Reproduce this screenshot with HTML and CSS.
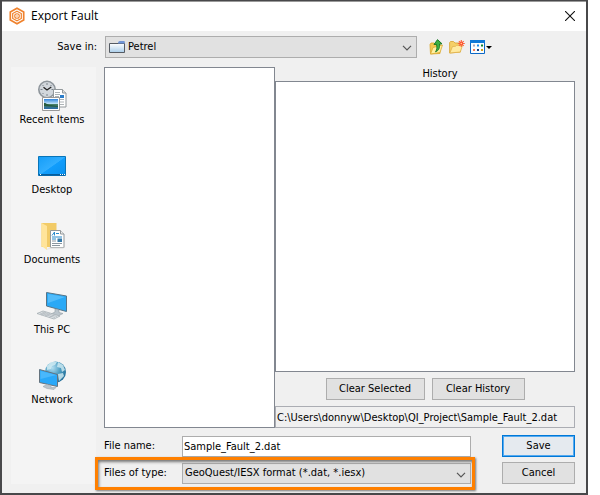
FILE: index.html
```html
<!DOCTYPE html>
<html lang="en">
<head>
<meta charset="utf-8">
<title>Export Fault</title>
<link rel="stylesheet" href="styles.css">
</head>
<body>
<main class="window">
  <header class="titlebar">
    <svg class="app-icon" width="16" height="18" viewBox="0 0 16 18" fill="none" stroke="#f0822d">
      <path d="M8 1.2 14.7 5v8L8 16.8 1.3 13V5z" stroke-width="1.7"/>
      <path d="M8 4.2 12.3 6.6v4.8L8 13.8l-4.3-2.4V6.6z" stroke-width="1.2"/>
      <circle cx="8" cy="9" r="2.3" stroke-width="1.1"/>
      <circle cx="8" cy="9" r=".7" fill="#f0822d" stroke="none"/>
    </svg>
    <h1 class="title">Export Fault</h1>
    <button class="close" type="button" aria-label="Close">
      <svg width="10" height="10" viewBox="0 0 10 10" stroke="#111" stroke-width="1.1"><path d="M0 0 10 10M10 0 0 10"/></svg>
    </button>
  </header>

  <form class="dialog">
    <div class="location">
      <label class="location-label" for="save-in">Save in:</label>
      <div class="combo combo-folder">
        <select id="save-in"><option>Petrel</option></select>
        <svg class="combo-icon" width="16" height="12" viewBox="0 0 16 12">
          <defs><linearGradient id="folder" x2="0" y2="1"><stop stop-color="#fff"/><stop offset="1" stop-color="#a9cdea"/></linearGradient></defs>
          <path d="M9 2.5 10.5.3H15.5v3H9z" fill="#5279c4"/>
          <path d="M.5 2.5h15v9H.5z" fill="url(#folder)" stroke="#555b63"/>
          <path d="M9.500 .5H15.500V2.500H9z" fill="#6f96da"/>
        </svg>
        <svg class="chevron" width="10" height="6" viewBox="0 0 10 6" fill="none" stroke="#555" stroke-width="1.2"><path d="M1 .8 5 4.8 9 .8"/></svg>
      </div>
      <div class="tools">
        <button class="tool" type="button" aria-label="Up one level">
          <svg width="15" height="16" viewBox="0 0 15 16">
            <path d="M1 5.5 2 4h3l1 1h5v9.5L1.5 15z" fill="#f2c84f" stroke="#d7a52c" stroke-width=".8"/>
            <path d="M1.5 15 4 8.5 13.5 6 11 13.5z" fill="#fff0a3" stroke="#dca931" stroke-width=".8"/>
            <path d="M8.5.6 13 4.8l-2.5.3c.3 3.6-.5 6.5-4 7.7C8.2 10.6 8.1 8 7.5 5.4L5 5.5z" fill="#3bb044" stroke="#157321" stroke-width=".9"/>
          </svg>
        </button>
        <button class="tool" type="button" aria-label="Create new folder">
          <svg width="16" height="14" viewBox="0 0 16 14">
            <path d="M.6 13V2.5L1.5 1.5h3L6 3h5.5v9z" fill="#f5cf67" stroke="#d9a83d" stroke-width=".9"/>
            <path d="M.8 13 3.5 6.5l3-.2 1.2-1h5.8L11.3 12z" fill="#ffeaa0" stroke="#e0b14b" stroke-width=".8"/>
            <g stroke="#fa6840" stroke-width="1.2"><path d="M12.3 0v7M8.9 3.5h6.9M9.9 1.1l4.8 4.8M14.7 1.1 9.9 5.9"/></g>
            <circle cx="12.3" cy="3.5" r="1.8" fill="#ff4c35"/><circle cx="12.3" cy="3.5" r=".8" fill="#ffda8a"/>
          </svg>
        </button>
        <button class="tool" type="button" aria-label="View menu">
          <svg width="22" height="14" viewBox="0 0 22 14">
            <path d="M.5.5h14v13H.5z" fill="#f8fcff" stroke="#0b68c6"/><path d="M0 0h15v3H0z" fill="#0f78d7"/>
            <path d="M3 4.500h2v2H3z" fill="#aaa5ba"/><path d="M7 4.500h2v2H7z" fill="#1689ec"/><path d="M11 4.500h2v2h-2z" fill="#128532"/>
            <path d="M3 9h2v2H3z" fill="#f47d55"/><path d="M7 9h2v2H7z" fill="#174488"/><path d="M11 9h2v2h-2z" fill="#d19c18"/>
            <path d="M16 6h6l-3 3z" fill="#000"/>
          </svg>
        </button>
      </div>
    </div>

    <div class="content">
      <nav class="places" aria-label="Places">
        <button class="place" type="button">
          <svg width="32" height="32" viewBox="0 0 32 32">
            <defs><linearGradient id="photo" x2="0" y2="1"><stop stop-color="#2f83da"/><stop offset=".5" stop-color="#c8e8fa"/><stop offset=".55" stop-color="#487f65"/><stop offset="1" stop-color="#286aa9"/></linearGradient></defs>
            <circle cx="11" cy="10.5" r="8.2" fill="#d2d7dc" stroke="#8e959b" stroke-width="1.6"/>
            <g stroke="#727a82" stroke-width=".9"><path d="M11 4v2M11 15v2M4.5 10.5h2M15.5 10.5h2M6.5 6l1 1M15.5 6l-1 1M6.5 15l1-1"/></g>
            <path d="M7.5 8.3 11 11l4.3-3" fill="none" stroke="#222" stroke-width="1.3"/>
            <path d="M17.5 10.5h9l3.500 3.500v14H17.500z" fill="#fff" stroke="#92989b"/>
            <path d="M26.500 10.500V14H30" fill="#ddd" stroke="#92989b"/>
            <path d="M19 13.500h5M19 15.500h5M19 17.500h4M19 20.500h9M19 23h9M19 25.500h9" stroke="#a4aaae" stroke-width=".9"/>
            <path d="M24 16h4v3h-4z" fill="#2b7dc9"/>
            <path d="M6.500 18.500h17v13h-17z" fill="#fff" stroke="#999"/>
            <path d="M8 20h14v10H8z" fill="url(#photo)"/><path d="M8 24c3 0 3 2 7 2l7 1v1l-14-1z" fill="#285d40"/>
          </svg>
          <span>Recent Items</span>
        </button>
        <button class="place" type="button">
          <svg width="32" height="32" viewBox="0 0 32 32">
            <defs><linearGradient id="screen" x2="1" y2="1"><stop stop-color="#159df7"/><stop offset=".5" stop-color="#31aeff"/><stop offset=".52" stop-color="#119dfc"/><stop offset="1" stop-color="#0b91ee"/></linearGradient></defs>
            <path d="M2.500 7.500h27v19h-27z" fill="url(#screen)" stroke="#0875b9"/>
            <path d="M3 25h26v1.500H3z" fill="#075d9c"/><path d="M4 25.500h1M24 25.500h1M26 25.500h1M28 25.500h1" stroke="#fff"/>
          </svg>
          <span>Desktop</span>
        </button>
        <button class="place" type="button">
          <svg width="32" height="32" viewBox="0 0 32 32">
            <path d="M5.500 4h15v24h-15z" fill="#f2cb67"/><path d="M5.500 4 11 7v24l-5.500-4z" fill="#ffe49a"/>
            <path d="M14.500 11.500h10l3.500 3.500v13.500H14.500z" fill="#fff" stroke="#92989b"/>
            <path d="M24.500 11.500V15H28" fill="#eee" stroke="#92989b"/>
            <path d="M16 16.500 18.500 13v3.500M20 14.500h3M16 18h10M16 20h4" fill="none" stroke="#2689cc"/>
            <path d="M16 22h4M16 24.500h10M16 26.500h8" stroke="#8c969f"/><path d="M21.500 19.500H26V23h-4.500z" fill="#3478a8"/>
            <path d="m10 31 4-3h15l-2 2H14z" fill="#d9d9d9" opacity=".5"/>
          </svg>
          <span>Documents</span>
        </button>
        <button class="place" type="button">
          <svg width="32" height="32" viewBox="0 0 32 32">
            <path d="m10.500 3.500 20 3.500v15.500l-20-5.500z" fill="#29a9f6" stroke="#567588"/>
            <path d="M12 5 29 8 12 14z" fill="#6cc9ff" opacity=".6"/>
            <path d="m19 20 4 1v2.500l4 1-5 2.500-7-2 4-2z" fill="#bac4cb" stroke="#929da4" stroke-width=".6"/>
            <path d="m1 24.500 6-2.500 17 5-6 3z" fill="#e1e6e9" stroke="#a5adb3" stroke-width=".8"/>
            <path d="m4 24 15 4.500M6 23l15 4.500M5 26l5-2.500M9 27l5-2.500M13 28.500l5-2.500" stroke="#aab2b7" stroke-width=".7"/>
          </svg>
          <span>This PC</span>
        </button>
        <button class="place" type="button">
          <svg width="32" height="32" viewBox="0 0 32 32">
            <defs><radialGradient id="globe" cx=".35" cy=".3" r=".75"><stop stop-color="#b3def0"/><stop offset=".5" stop-color="#4f9fc3"/><stop offset="1" stop-color="#206d98"/></radialGradient></defs>
            <circle cx="19.500" cy="13" r="10.500" fill="url(#globe)"/>
            <path d="m11 7 4-4 6 0-2 3-3 1-1 3-4 1zM22 3l5 3 2 5-3 2-1-4-4-1zM22 15l5-1 1 3-5 5z" fill="#d4edf4" opacity=".8"/>
            <path d="m3.500 10.500 18 5v12l-18-4z" fill="#29a8f8" stroke="#65737e"/>
            <path d="m4.500 12 16 4-16 4z" fill="#6ac8ff" opacity=".5"/>
            <path d="m11 25.500 4 1v2h5l-2 2-7-1-4-2z" fill="#bac4cb" stroke="#9da7ae" stroke-width=".6"/>
          </svg>
          <span>Network</span>
        </button>
      </nav>

      <div class="work">
        <div class="panes">
          <div class="listbox" role="listbox" aria-label="Files" tabindex="0"></div>
          <section class="history">
            <h2 class="history-title" id="history-title">History</h2>
            <div class="listbox history-list" role="listbox" aria-labelledby="history-title" tabindex="0"></div>
            <div class="history-actions">
              <button class="btn btn-selected" type="button">Clear Selected</button>
              <button class="btn btn-history" type="button">Clear History</button>
            </div>
            <input class="field path" type="text" aria-label="Full path" readonly value="C:\Users\donnyw\Desktop\QI_Project\Sample_Fault_2.dat">
          </section>
        </div>
        <div class="entry">
          <div class="entry-row">
            <label for="file-name">File name:</label>
            <input class="field" id="file-name" type="text" value="Sample_Fault_2.dat">
          </div>
          <button class="btn btn-primary" type="submit">Save</button>
          <div class="entry-row marked">
            <label for="file-type">Files of type:</label>
            <div class="combo combo-type">
              <select id="file-type"><option>GeoQuest/IESX format (*.dat, *.iesx)</option></select>
              <svg class="chevron" width="10" height="6" viewBox="0 0 10 6" fill="none" stroke="#555" stroke-width="1.2"><path d="M1 .8 5 4.8 9 .8"/></svg>
            </div>
          </div>
          <button class="btn" type="button">Cancel</button>
        </div>
      </div>
    </div>
  </form>
</main>
</body>
</html>
```
FILE: styles.css
```css
* { box-sizing: border-box; }

body {
  margin: 0;
  background: #fff;
  color: #000;
  font: 11px/14px "DejaVu Sans Condensed", "DejaVu Sans", sans-serif;
  font-stretch: condensed;
}

button, input, select { font: inherit; color: inherit; margin: 0; border-radius: 0; }
h1, h2 { margin: 0; font-size: inherit; font-weight: 400; }
svg { display: block; flex: none; }

.window {
  display: flex;
  flex-direction: column;
  min-height: 100vh;
  margin-right: 12px;
  border: 2px solid #48484a;
  border-top-width: 1px;
  background: #f0f0f0;
}

.titlebar {
  display: flex;
  align-items: center;
  gap: 6px;
  height: 30px;
  padding: 0 11px 2px 7px;
  border-top: 1px solid #999;
  background: #fff;
}
.title { flex: 1; font: 12px/16px "Open Sans", "Noto Sans", sans-serif; }
.close, .tool, .place { border: 0; padding: 0; background: none; }

.dialog {
  flex: 1;
  display: flex;
  flex-direction: column;
  gap: 9px;
  padding: 5px 11px 9px 9px;
}

.location { display: flex; align-items: center; }
.location-label { width: 94px; padding-right: 8px; text-align: right; }
.location .combo { flex: 1; }

.combo { position: relative; }
.combo select {
  display: block;
  width: 100%;
  height: 22px;
  padding: 0 24px 0 2px;
  border: 1px solid #adadad;
  background: #e1e1e1;
  appearance: none;
}
.combo-folder select { padding-left: 22px; }
.combo-icon { position: absolute; left: 4px; top: 5px; }
.chevron { position: absolute; right: 5px; top: 9px; pointer-events: none; }

.tools { display: flex; align-items: center; gap: 5px; width: 158px; padding-left: 12px; }

.content { flex: 1; display: flex; gap: 8px; }
.places {
  display: flex;
  flex-direction: column;
  gap: 20px;
  width: 85px;
  padding: 12px 3px 0 0;
  background: #f4f4f4;
}
.place {
  display: flex;
  flex-direction: column;
  align-items: center;
  gap: 2px;
  height: 50px;
  white-space: nowrap;
}

.work { flex: 1; display: flex; flex-direction: column; gap: 7px; }
.panes { flex: 1; display: grid; grid-template-columns: 171fr 300fr; }
.listbox { border: 1px solid #828790; background: #fff; }
.history { display: flex; flex-direction: column; }
.history-title { padding-left: 30px; text-align: center; }
.history-list { flex: 1; }
.history-actions { display: flex; justify-content: center; gap: 7px; padding: 6px 0; }

.btn { height: 22px; padding: 0; border: 1px solid #adadad; background: #e1e1e1; }
.btn-selected { width: 99px; }
.btn-history { width: 93px; }
.btn-primary { border: 1px solid #0078d7; background: #e5eaef; box-shadow: inset 0 0 0 1px #55aaf0; }

.field { width: 100%; height: 21px; padding: 0 1px; border: 1px solid #adadad; background: #fff; }
.field.path { height: 22px; border-color: #abadb3; background: #f0f0f0; }

.entry { display: grid; grid-template-columns: 1fr 73px; gap: 5px 31px; }
.entry-row { display: grid; grid-template-columns: 78px 1fr; align-items: center; }
.combo-type select { height: 21px; }

/* Call-out frame around the file type row. */
.marked { position: relative; }
.marked::after {
  content: "";
  position: absolute;
  inset: -5px -4px -6px -9px;
  border: 3px solid #ff8000;
  box-shadow: 1px 1px 2px #777, inset 1px 2px 3px #777;
  pointer-events: none;
}
```
